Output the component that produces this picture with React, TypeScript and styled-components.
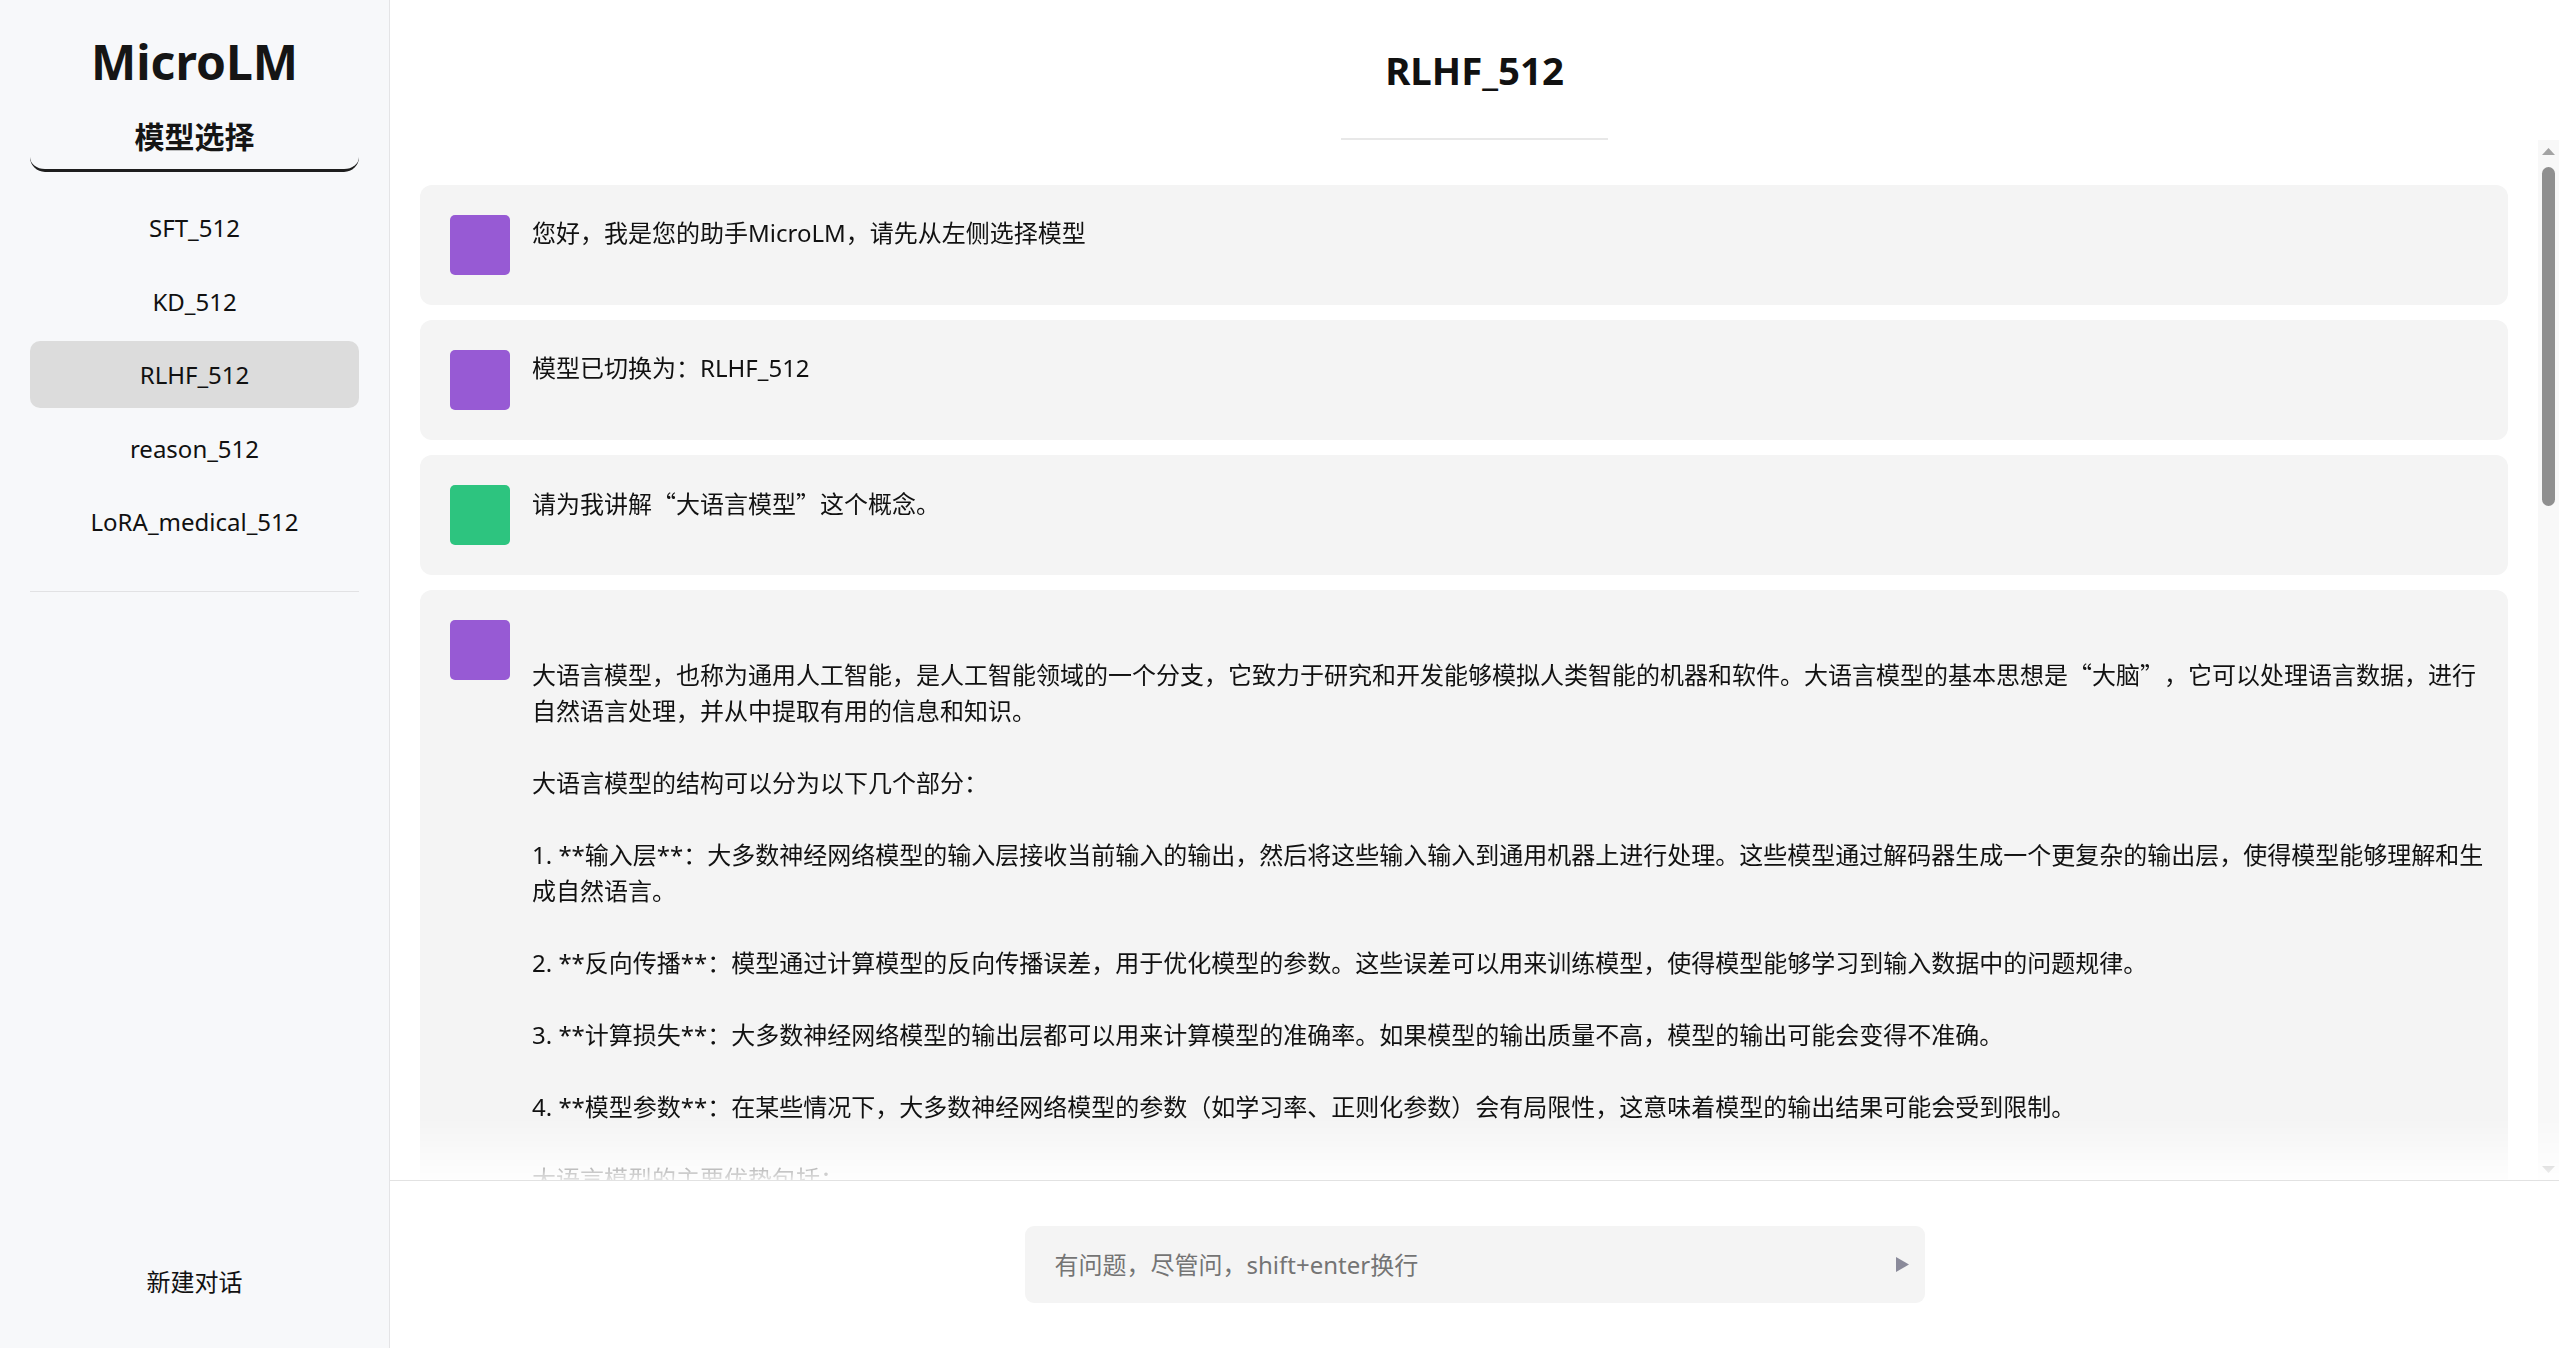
import React from "react";
import styled, { createGlobalStyle } from "styled-components";

const GlobalStyle = createGlobalStyle`
  html, body {
    margin: 0;
    padding: 0;
    height: 100%;
    background: #ffffff;
  }
  #root {
    height: 100%;
  }
  * {
    box-sizing: border-box;
  }
  body {
    font-family: "Noto Sans", "Noto Sans CJK SC", sans-serif;
    color: #111111;
  }
`;

const Layout = styled.div`
  display: flex;
  height: 100vh;
  overflow: hidden;
`;

const Sidebar = styled.aside`
  width: 390px;
  flex-shrink: 0;
  display: flex;
  flex-direction: column;
  padding: 0 30px 34.5px;
  background: #f7f8fa;
  border-right: 1px solid #e4e4e6;
`;

const Brand = styled.h1`
  margin: 33px 0 0;
  font-size: 48px;
  line-height: 57.6px;
  font-weight: 700;
  text-align: center;
  color: #151515;
`;

const SectionTitle = styled.h2`
  margin: 23.4px 0 0;
  padding-bottom: 10px;
  font-size: 30px;
  line-height: 45px;
  font-weight: 700;
  text-align: center;
  color: #151515;
  border-bottom: 3px solid #1e1e1e;
  border-radius: 15px;
`;

const ModelList = styled.ul`
  list-style: none;
  margin: 22.5px 0 0;
  padding: 0;
  display: flex;
  flex-direction: column;
  gap: 6.5px;
`;

const ModelItem = styled.li<{ $active?: boolean }>`
  height: 67px;
  display: flex;
  align-items: center;
  justify-content: center;
  font-size: 24px;
  color: #111111;
  border-radius: 10px;
  background: ${(p) => (p.$active ? "#dcdcdc" : "transparent")};
  cursor: pointer;
`;

const SideDivider = styled.hr`
  margin: 35.5px 0 0;
  border: none;
  height: 1px;
  background: #e2e2e4;
`;

const Spacer = styled.div`
  flex: 1;
`;

const NewChatButton = styled.div`
  height: 67px;
  display: flex;
  align-items: center;
  justify-content: center;
  font-size: 24px;
  color: #111111;
  cursor: pointer;
`;

const Main = styled.main`
  flex: 1;
  min-width: 0;
  display: flex;
  flex-direction: column;
  background: #ffffff;
`;

const Header = styled.header`
  display: flex;
  flex-direction: column;
  align-items: center;
  padding-top: 41.5px;
`;

const HeaderTitle = styled.h2`
  margin: 0 0 39px;
  font-size: 38.4px;
  line-height: 57.6px;
  font-weight: 700;
  color: #111111;
`;

const HeaderRule = styled.div`
  width: 267px;
  height: 2px;
  background: #e8e8e8;
`;

const MessagePane = styled.div`
  flex: 1;
  min-height: 0;
  display: flex;
  -webkit-mask-image: linear-gradient(to bottom, #000 calc(100% - 62px), rgba(0, 0, 0, 0.12) 100%);
  mask-image: linear-gradient(to bottom, #000 calc(100% - 62px), rgba(0, 0, 0, 0.12) 100%);
`;

const MessageList = styled.div`
  flex: 1;
  min-width: 0;
  overflow-y: auto;
  scrollbar-width: none;
  padding: 45px 30px 30px;
  display: flex;
  flex-direction: column;
  gap: 15px;
`;

const ScrollRail = styled.div`
  width: 21px;
  flex-shrink: 0;
  display: flex;
  flex-direction: column;
  background: #f8f8f8;
`;

const RailArrow = styled.div`
  height: 22px;
  flex-shrink: 0;
  display: flex;
  align-items: center;
  justify-content: center;
`;

const RailTrack = styled.div`
  flex: 1;
  padding: 5px 4px 0;
`;

const RailThumb = styled.div`
  height: 339px;
  border-radius: 7px;
  background: #8f8f8f;
`;

const Bubble = styled.div`
  flex-shrink: 0;
  display: flex;
  align-items: flex-start;
  gap: 22px;
  padding: 30px 24px 30px 30px;
  background: #f4f4f4;
  border-radius: 12px;
`;

const Avatar = styled.div<{ $color: string }>`
  width: 60px;
  height: 60px;
  flex-shrink: 0;
  border-radius: 5px;
  background: ${(p) => p.$color};
`;

const BubbleText = styled.div`
  flex: 1;
  min-width: 0;
  white-space: pre-wrap;
  font-size: 24px;
  line-height: 36px;
  color: #111111;
  text-spacing-trim: space-all;
`;

const Quote = styled.span`
  font-family: "Noto Sans CJK SC", sans-serif;
  font-feature-settings: "fwid" 1;
`;

const Composer = styled.footer`
  height: 168px;
  flex-shrink: 0;
  display: flex;
  align-items: center;
  justify-content: center;
  border-top: 1px solid #e2e2e2;
`;

const InputBox = styled.div`
  width: 900px;
  height: 77px;
  display: flex;
  align-items: center;
  padding: 0 16px 0 30px;
  background: #f4f4f4;
  border-radius: 9px;
`;

const Input = styled.input`
  flex: 1;
  min-width: 0;
  border: none;
  outline: none;
  background: transparent;
  font-family: "Noto Sans", "Noto Sans CJK SC", sans-serif;
  font-size: 24px;
  color: #111111;
  padding: 0;

  &::placeholder {
    color: #747474;
  }
`;

const SendButton = styled.button`
  border: none;
  background: transparent;
  padding: 0;
  display: flex;
  align-items: center;
  cursor: pointer;
`;

const PURPLE = "#975ad4";
const GREEN = "#2dc47f";

const models = ["SFT_512", "KD_512", "RLHF_512", "reason_512", "LoRA_medical_512"];

const longAnswer =
  "\n大语言模型，也称为通用人工智能，是人工智能领域的一个分支，它致力于研究和开发能够模拟人类智能的机器和软件。大语言模型的基本思想是“大脑”，它可以处理语言数据，进行自然语言处理，并从中提取有用的信息和知识。" +
  "\n\n大语言模型的结构可以分为以下几个部分：" +
  "\n\n1. **输入层**：大多数神经网络模型的输入层接收当前输入的输出，然后将这些输入输入到通用机器上进行处理。这些模型通过解码器生成一个更复杂的输出层，使得模型能够理解和生成自然语言。" +
  "\n\n2. **反向传播**：模型通过计算模型的反向传播误差，用于优化模型的参数。这些误差可以用来训练模型，使得模型能够学习到输入数据中的问题规律。" +
  "\n\n3. **计算损失**：大多数神经网络模型的输出层都可以用来计算模型的准确率。如果模型的输出质量不高，模型的输出可能会变得不准确。" +
  "\n\n4. **模型参数**：在某些情况下，大多数神经网络模型的参数（如学习率、正则化参数）会有局限性，这意味着模型的输出结果可能会受到限制。" +
  "\n\n大语言模型的主要优势包括：" +
  "\n\n1. **强大的语言理解能力**：大语言模型能够理解复杂的语言结构和上下文信息，从而更准确地回答用户的问题。" +
  "\n\n2. **广泛的知识覆盖**：大语言模型在训练过程中学习了大量的文本数据，因此能够覆盖多个领域的知识。" +
  "\n\n3. **灵活的生成能力**：大语言模型可以根据输入生成连贯、自然的文本，适用于写作、翻译、摘要等多种任务。" +
  "\n\n4. **可迁移性**：大语言模型可以通过微调适应特定的下游任务，例如医疗问答、代码生成和对话系统。" +
  "\n\n大语言模型的主要挑战包括：" +
  "\n\n1. **计算资源需求高**：训练和部署大语言模型需要大量的计算资源和存储空间。" +
  "\n\n2. **数据偏差**：训练数据中存在的偏差可能会导致模型输出带有偏见的结果。" +
  "\n\n3. **可解释性不足**：大语言模型的内部机制较为复杂，难以解释其输出结果的原因。" +
  "\n\n4. **事实准确性**：大语言模型有时会生成看似合理但实际上不准确的信息。" +
  "\n\n总之，大语言模型是人工智能领域的重要研究方向，它在自然语言处理、智能问答和内容生成等方面具有广阔的应用前景。随着技术的不断发展，大语言模型将会变得更加高效、可靠和安全。" +
  "\n\n如果你还有其他问题，欢迎继续提问。";

type Msg = { color: string; text: string };

const messages: Msg[] = [
  { color: PURPLE, text: "您好，我是您的助手MicroLM，请先从左侧选择模型" },
  { color: PURPLE, text: "模型已切换为：RLHF_512" },
  { color: GREEN, text: "请为我讲解“大语言模型”这个概念。" },
  { color: PURPLE, text: longAnswer },
];

function renderText(text: string) {
  return text.split(/([“”])/).map((part, i) =>
    part === "“" || part === "”" ? <Quote key={i}>{part}</Quote> : <React.Fragment key={i}>{part}</React.Fragment>
  );
}

export default function App() {
  return (
    <>
      <GlobalStyle />
      <Layout>
        <Sidebar>
          <Brand>MicroLM</Brand>
          <SectionTitle>模型选择</SectionTitle>
          <ModelList>
            {models.map((m) => (
              <ModelItem key={m} $active={m === "RLHF_512"}>
                {m}
              </ModelItem>
            ))}
          </ModelList>
          <SideDivider />
          <Spacer />
          <NewChatButton>新建对话</NewChatButton>
        </Sidebar>
        <Main>
          <Header>
            <HeaderTitle>RLHF_512</HeaderTitle>
            <HeaderRule />
          </Header>
          <MessagePane>
            <MessageList>
              {messages.map((m, i) => (
                <Bubble key={i}>
                  <Avatar $color={m.color} />
                  <BubbleText>{renderText(m.text)}</BubbleText>
                </Bubble>
              ))}
            </MessageList>
            <ScrollRail>
              <RailArrow>
                <svg width="13" height="7" viewBox="0 0 13 7">
                  <polygon points="0,7 6.5,0 13,7" fill="#a3a3a3" />
                </svg>
              </RailArrow>
              <RailTrack>
                <RailThumb />
              </RailTrack>
              <RailArrow>
                <svg width="13" height="7" viewBox="0 0 13 7">
                  <polygon points="0,0 13,0 6.5,7" fill="#a3a3a3" />
                </svg>
              </RailArrow>
            </ScrollRail>
          </MessagePane>
          <Composer>
            <InputBox>
              <Input placeholder="有问题，尽管问，shift+enter换行" />
              <SendButton aria-label="发送">
                <svg width="13" height="15" viewBox="0 0 13 15">
                  <polygon points="0,0 13,7.5 0,15" fill="#8a8a9a" />
                </svg>
              </SendButton>
            </InputBox>
          </Composer>
        </Main>
      </Layout>
    </>
  );
}
